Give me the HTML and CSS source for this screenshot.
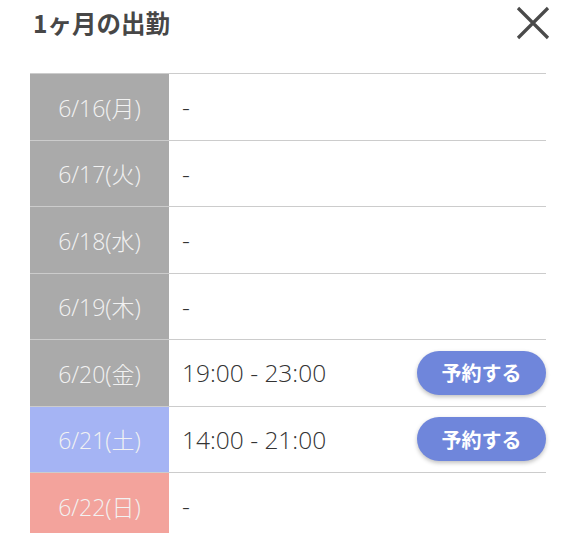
FILE: index.html
```html
<!DOCTYPE html>
<html lang="ja">
<head>
<meta charset="utf-8">
<link rel="stylesheet" href="styles.css">
</head>
<body>
<div class="modal">
  <div class="header">
    <h1 class="title">1ヶ月の出勤</h1>
    <svg class="close" width="36" height="36" viewBox="0 0 36 36"><path d="M3 3 L33 33 M33 3 L3 33" stroke="#4a4a4a" stroke-width="3.2" fill="none"/></svg>
  </div>
  <div class="table">
    <div class="row"><div class="date">6/16(月)</div><div class="time">-</div></div>
    <div class="row"><div class="date">6/17(火)</div><div class="time">-</div></div>
    <div class="row"><div class="date">6/18(水)</div><div class="time">-</div></div>
    <div class="row"><div class="date">6/19(木)</div><div class="time">-</div></div>
    <div class="row"><div class="date">6/20(金)</div><div class="time">19:00 - 23:00</div><button class="btn">予約する</button></div>
    <div class="row"><div class="date sat">6/21(土)</div><div class="time">14:00 - 21:00</div><button class="btn">予約する</button></div>
    <div class="row"><div class="date sun">6/22(日)</div><div class="time">-</div></div>
  </div>
</div>
</body>
</html>
```
FILE: styles.css
```css
html, body { margin: 0; padding: 0; background: #fff; }
body { font-family: "Open Sans", "Noto Sans CJK JP", sans-serif; color: #333; overflow: hidden; height: 533px; }
.modal { padding: 0 30px 0 30px; }
.header { display: flex; justify-content: space-between; height: 73px; align-items: flex-start; }
.title { margin: 6px 0 0 3px; font-family: "Noto Sans CJK JP", sans-serif; font-size: 24.5px; font-weight: 700; color: #474747; line-height: 34px; }
.close { margin: 5px -5px 0 0; }
.table { border-top: 1px solid #ccc; }
.row { display: flex; align-items: center; height: 65.5px; border-bottom: 1px solid #ccc; }
.date { width: 139px; align-self: stretch; display: flex; align-items: center; justify-content: center; background: #aaaaaa; color: #f2f2f2; font-size: 23px; font-weight: 300; }
.date.sat { background: #a5b4f4; }
.date.sun { background: #f3a39c; }
.time { flex: 1; padding-left: 13px; font-size: 24.5px; color: #333; font-weight: 300; }
.btn { width: 129px; height: 44px; border: none; border-radius: 22px; background: #6f86db; color: #fff; font-family: "Noto Sans CJK JP", sans-serif; font-size: 20px; font-weight: 700; box-shadow: 0 2px 4px rgba(0,0,0,0.25); padding: 0; }
```
